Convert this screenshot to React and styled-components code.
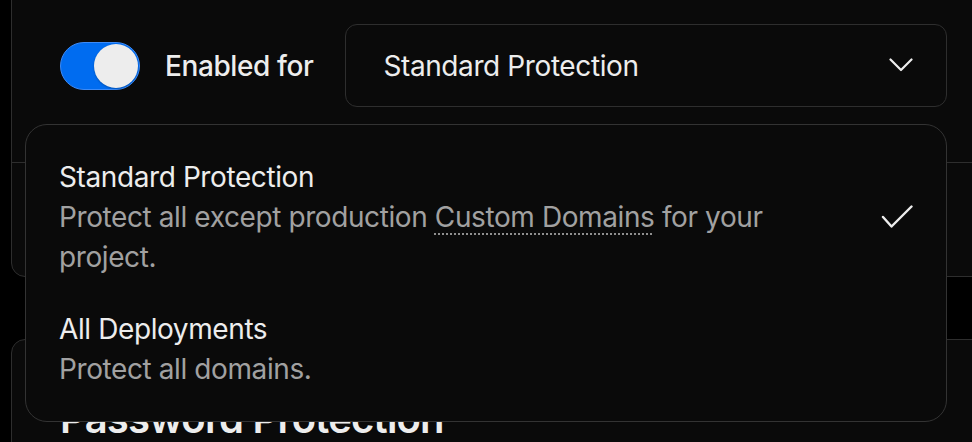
import React from 'react'
import styled, { createGlobalStyle } from 'styled-components'

const GlobalStyle = createGlobalStyle`
  html, body {
    margin: 0;
    padding: 0;
    background: #000;
    overflow: hidden;
  }
  body {
    font-family: Inter, "Noto Sans", "Liberation Sans", sans-serif;
    color: #ededed;
    -webkit-font-smoothing: antialiased;
  }
`

function ChevronDown() {
  return (
    <svg width="24" height="15" viewBox="0 0 24 15" fill="none">
      <polyline
        points="1.5,1.5 12,12 22.5,1.5"
        stroke="#ededed"
        strokeWidth="2.2"
        strokeLinecap="round"
        strokeLinejoin="round"
      />
    </svg>
  )
}

function Check() {
  return (
    <svg width="32" height="24" viewBox="0 0 32 24" fill="none">
      <polyline
        points="2,12 10.5,21.5 30.5,1.5"
        stroke="#ededed"
        strokeWidth="2.4"
        strokeLinecap="round"
        strokeLinejoin="round"
      />
    </svg>
  )
}

function App() {
  const options = [
    {
      title: 'Standard Protection',
      description: (
        <>
          Protect all except production <Hint>Custom Domains</Hint> for your project.
        </>
      ),
      selected: true,
    },
    {
      title: 'All Deployments',
      description: 'Protect all domains.',
      selected: false,
    },
  ]

  return (
    <>
      <GlobalStyle />
      <Page>
        <Card $top>
          <Section>
            <Toggle aria-checked="true" role="switch">
              <Knob />
            </Toggle>
            <Label>Enabled for</Label>
            <Select>
              <span>Standard Protection</span>
              <ChevronDown />
            </Select>
          </Section>
          <Footer />
        </Card>

        <Card>
          <Heading>Password Protection</Heading>
        </Card>

        <Menu>
          {options.map((opt) => (
            <Option key={opt.title}>
              <OptionText>
                <OptionTitle>{opt.title}</OptionTitle>
                <OptionDesc>{opt.description}</OptionDesc>
              </OptionText>
              {opt.selected && <Check />}
            </Option>
          ))}
        </Menu>
      </Page>
    </>
  )
}

const Page = styled.div`
  position: relative;
  width: 972px;
  height: 442px;
  overflow: hidden;
  display: flex;
  flex-direction: column;
  gap: 62px;
  padding-left: 11px;
  box-sizing: border-box;
  letter-spacing: -0.4px;
`

const Card = styled.div`
  margin-top: ${(p) => (p.$top ? '-32px' : '0')};
  margin-right: -40px;
  background: #0a0a0a;
  border: 1px solid #2e2e2e;
  border-radius: 14px;
  flex-shrink: 0;
`

const Section = styled.div`
  display: flex;
  align-items: center;
  padding: 55px 48px;
  border-bottom: 1px solid #2e2e2e;
`

const Footer = styled.div`
  height: 113px;
`

const Toggle = styled.div`
  width: 80px;
  height: 48px;
  box-sizing: border-box;
  border-radius: 24px;
  background: #006cf0;
  border: 1.5px solid #3d8bf7;
  display: flex;
  align-items: center;
  justify-content: flex-end;
  padding: 0 1px;
  flex-shrink: 0;
`

const Knob = styled.div`
  width: 44px;
  height: 44px;
  border-radius: 50%;
  background: #ededed;
  box-shadow: 0 1px 2px rgba(0, 0, 0, 0.25);
`

const Label = styled.span`
  margin-left: 25px;
  margin-right: 32px;
  font-size: 28px;
  font-weight: 500;
  color: #ededed;
  white-space: nowrap;
`

const Select = styled.div`
  width: 602px;
  height: 83px;
  box-sizing: border-box;
  border: 1px solid #2e2e2e;
  border-radius: 12px;
  display: flex;
  align-items: center;
  justify-content: space-between;
  padding: 0 33px 0 37px;
  font-size: 28px;
  font-weight: 400;
  color: #ededed;
  flex-shrink: 0;
`

const Heading = styled.h2`
  margin: 0;
  padding: 55px 48px 20px;
  font-size: 40px;
  line-height: 48px;
  font-weight: 600;
  letter-spacing: -0.8px;
  color: #ededed;
`

const Menu = styled.div`
  position: absolute;
  top: 124px;
  left: 25px;
  width: 922px;
  box-sizing: border-box;
  padding: 16px;
  background: #0a0a0a;
  border: 1px solid #333;
  border-radius: 22px;
  display: flex;
  flex-direction: column;
`

const Option = styled.div`
  display: flex;
  align-items: center;
  justify-content: space-between;
  padding: 16px 17px;
  border-radius: 12px;
`

const OptionText = styled.div`
  display: flex;
  flex-direction: column;
  max-width: 730px;
`

const OptionTitle = styled.span`
  font-size: 28px;
  line-height: 40px;
  color: #ededed;
`

const OptionDesc = styled.span`
  font-size: 28px;
  line-height: 40px;
  color: #a1a1a1;
`

const Hint = styled.span`
  text-decoration: underline dotted #8f8f8f;
  text-decoration-thickness: 2px;
  text-underline-offset: 6px;
`

export default App
